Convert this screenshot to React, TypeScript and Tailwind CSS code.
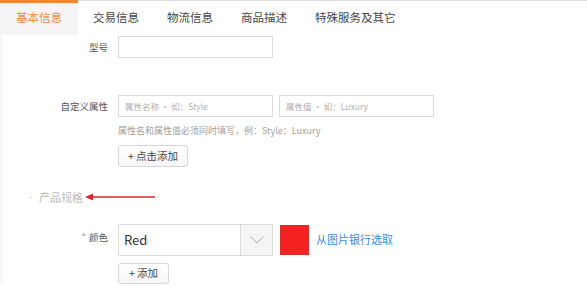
const tabs = ["交易信息", "物流信息", "商品描述", "特殊服务及其它"]

function Label({ children }: { children: React.ReactNode }) {
    return <div className="w-[105px] shrink-0 text-right text-[9.5px] text-[#555]">{children}</div>
}

export default function App() {
    return (
        <div className="h-[298px] w-[587px] overflow-hidden bg-white font-['Noto_Sans_CJK_SC','Noto_Sans',sans-serif]">
            {/* Tabs */}
            <div className="flex h-[35px] border-t border-[#dedede]">
                <div className="relative flex w-[78px] items-center justify-center bg-[#f5f5f7] text-[11.5px] text-[#f08a4b]">
                    <div className="absolute -top-px left-0 h-[3px] w-full bg-[#f0883a]" />
                    基本信息
                </div>
                {tabs.map(t => (
                    <div key={t} className="flex w-[74px] items-center whitespace-nowrap pl-[15px] text-[11.5px] text-[#444]">
                        {t}
                    </div>
                ))}
            </div>

            {/* Form */}
            <div className="flex flex-col border-l-[3px] border-[#f7f7f9]">
                <div className="mt-px flex items-center gap-[10px]">
                    <Label>型号</Label>
                    <div className="h-[22px] w-[155px] border border-[#dcdcdc] bg-white" />
                </div>

                <div className="mt-[37px] flex items-center gap-[10px]">
                    <Label>自定义属性</Label>
                    <div className="flex gap-[6px]">
                        <div className="flex h-[22px] w-[155px] items-center border border-[#dcdcdc] px-[6px] text-[8.5px] text-[#b0b0b0]">
                            属性名称 · 如：Style
                        </div>
                        <div className="flex h-[22px] w-[155px] items-center border border-[#dcdcdc] px-[6px] text-[8.5px] text-[#b0b0b0]">
                            属性值 · 如：Luxury
                        </div>
                    </div>
                </div>

                <div className="mt-[7px] pl-[115px] text-[9px] leading-[14px] text-[#a0a0a0]">
                    属性名和属性值必须同时填写，例：Style：Luxury
                </div>

                <div className="mt-[7px] pl-[115px]">
                    <button className="flex h-[22px] w-[70px] items-center justify-center rounded-[3px] border border-[#d6d6d6] bg-gradient-to-b from-white to-[#f6f6f6] text-[10.5px] text-[#444]">
                        + 点击添加
                    </button>
                </div>

                {/* Section header */}
                <div className="mt-[22px] flex items-center pl-[26px]">
                    <span className="mr-[7px] h-px w-[3px] bg-[#ddd]" />
                    <span className="text-[11px] text-[#bbb]">产品规格</span>
                    <svg width="72" height="10" viewBox="0 0 72 10" className="ml-[2px]">
                        <line x1="6" y1="5" x2="70" y2="5" stroke="#d9262c" strokeWidth="1.6" />
                        <polygon points="0,5 8,1.5 8,8.5" fill="#d9262c" />
                    </svg>
                </div>

                <div className="mt-[18px] flex items-start gap-[10px]">
                    <div className="w-[105px] shrink-0 pt-[6px] text-right text-[9.5px] text-[#555]">
                        <span className="mr-[3px] text-[#d98080]">*</span>颜色
                    </div>
                    <div className="flex flex-col gap-[7px]">
                        <div className="flex items-center gap-[7px]">
                            <div className="flex h-[32px] w-[155px] border border-[#dcdcdc]">
                                <div className="flex flex-1 items-center pl-[5px] text-[13px] text-[#333]">Red</div>
                                <div className="flex w-[32px] items-center justify-center border-l border-[#dcdcdc] bg-[#f5f5f5]">
                                    <svg width="14" height="8" viewBox="0 0 14 8">
                                        <polyline points="0.5,0.5 7,7 13.5,0.5" fill="none" stroke="#aaa" strokeWidth="1" />
                                    </svg>
                                </div>
                            </div>
                            <div className="h-[30px] w-[29px] border border-[#d43030] bg-[#f52222]" />
                            <span className="text-[11px] text-[#3a8ad8]">从图片银行选取</span>
                        </div>
                        <button className="flex h-[21px] w-[51px] items-center justify-center rounded-[3px] border border-[#d6d6d6] bg-gradient-to-b from-white to-[#f6f6f6] text-[10.5px] text-[#444]">
                            + 添加
                        </button>
                    </div>
                </div>
            </div>
        </div>
    )
}
